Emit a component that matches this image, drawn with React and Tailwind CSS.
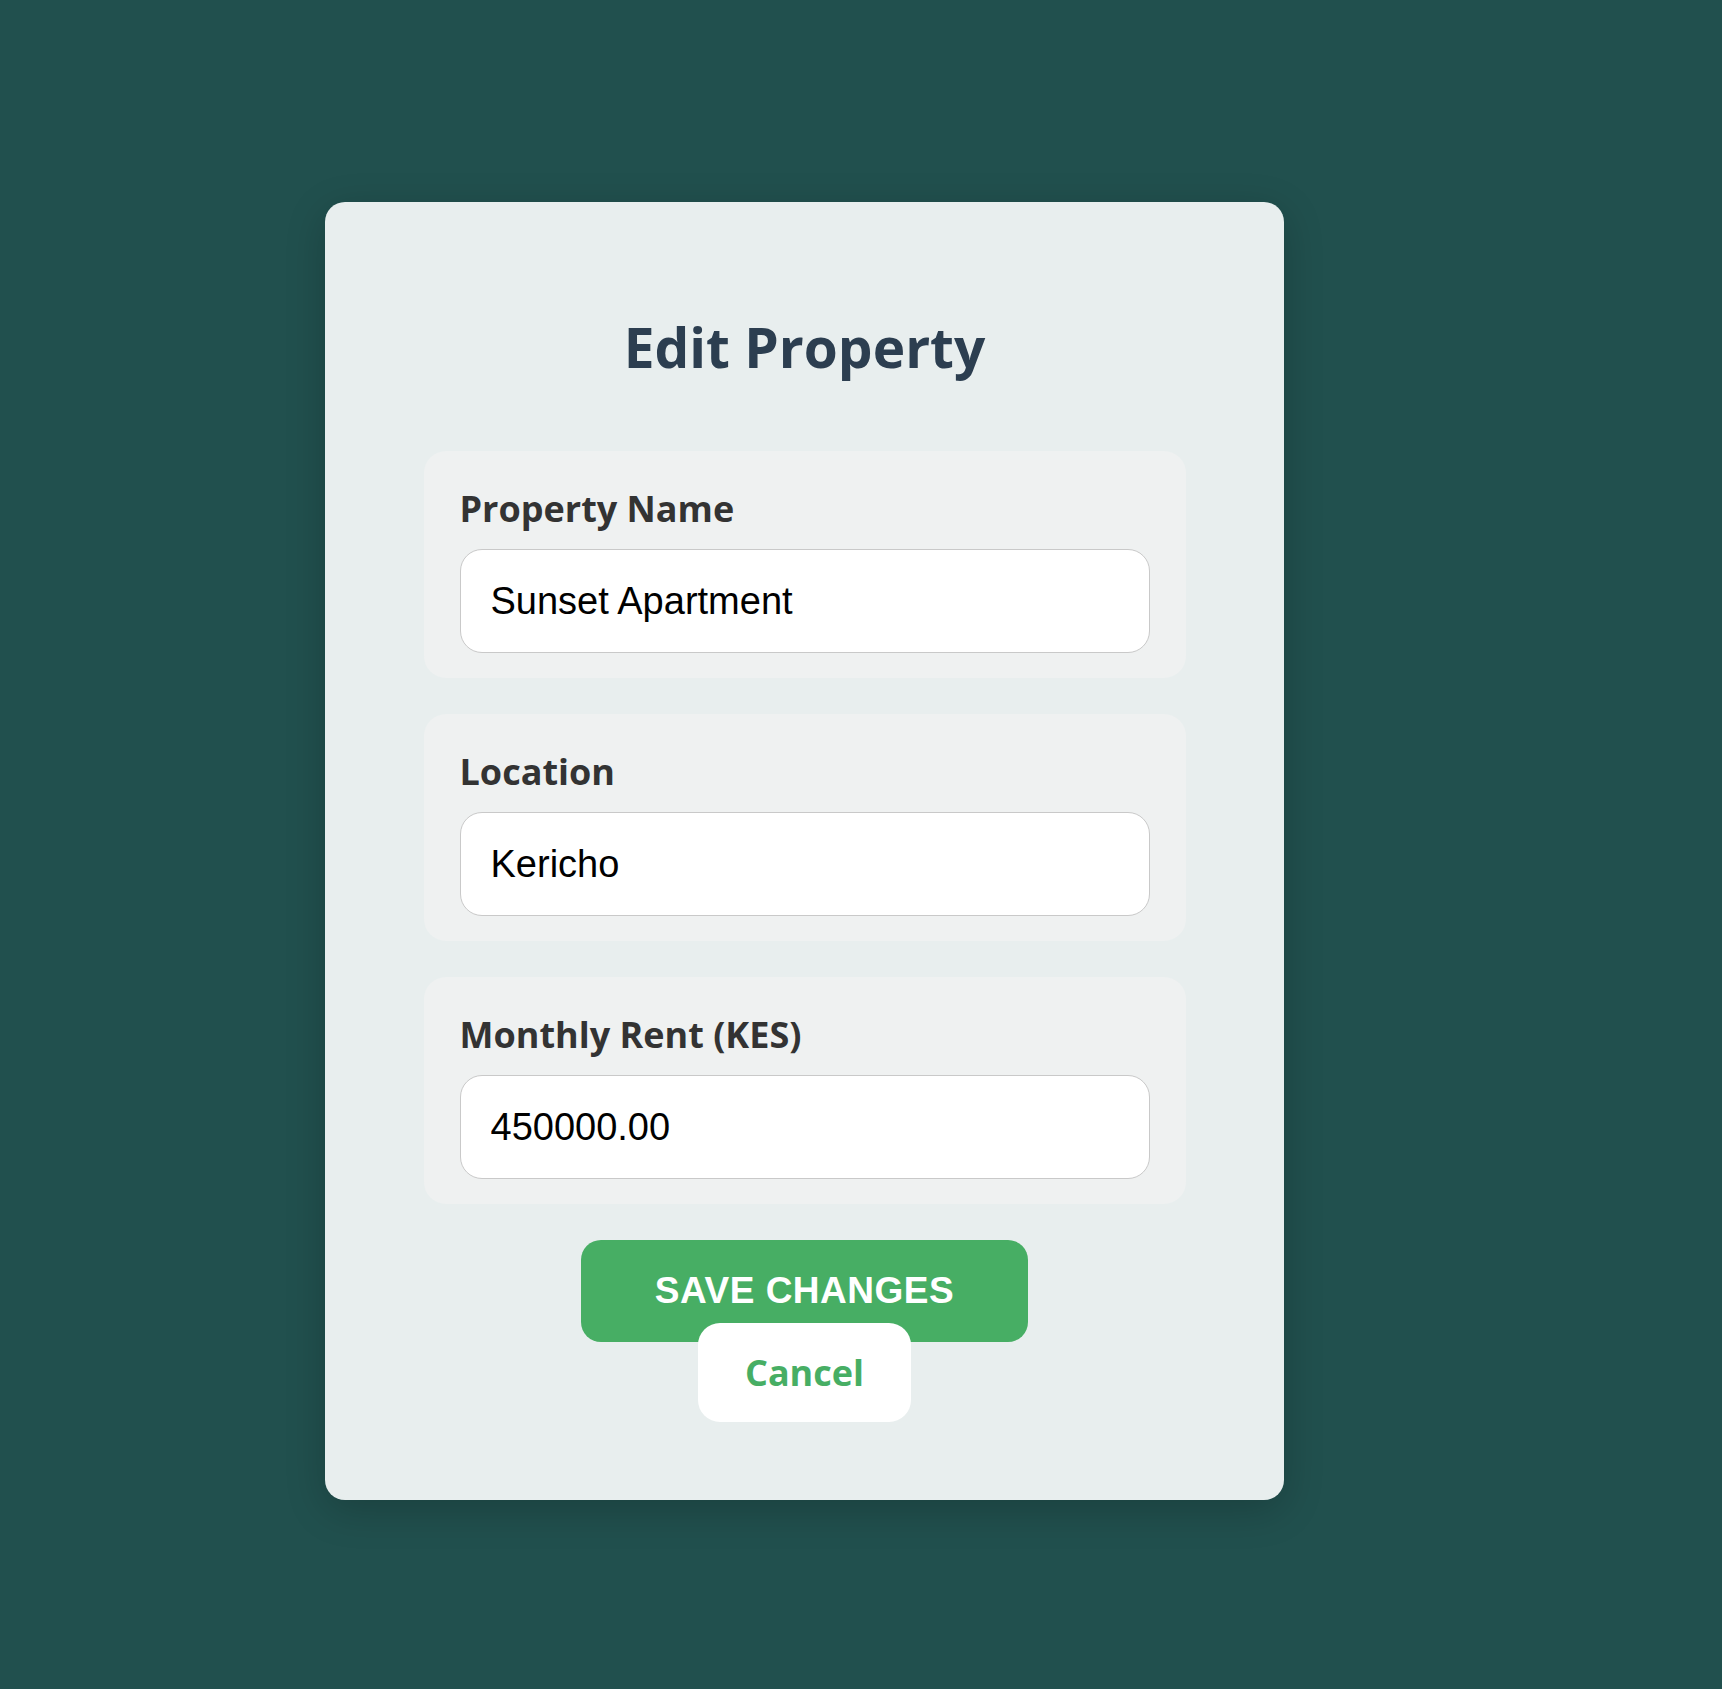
import React, { useState } from 'react';

const FIELDS = [
  { key: 'name', label: 'Property Name', type: 'text' },
  { key: 'location', label: 'Location', type: 'text' },
  { key: 'rent', label: 'Monthly Rent (KES)', type: 'number' },
];

export default function App() {
  const [form, setForm] = useState({
    name: 'Sunset Apartment',
    location: 'Kericho',
    rent: '450000.00',
  });

  const handleChange = (key, value) => {
    setForm((prev) => ({
      ...prev,
      [key]: value,
    }));
  };

  return (
    <div className="min-h-screen bg-[#21504e] pt-[202px] pb-[188px] pl-[325px]">
      <div className="w-[959px] rounded-[20px] bg-[#e8eeee] pt-[107px] pb-[78px] shadow-[0_10px_40px_rgba(0,0,0,0.2)] font-['Open_Sans',sans-serif]">
        <h2 className="mb-[66px] text-center text-[55px] font-bold leading-[76px] text-[#2c3e50]">
          Edit Property
        </h2>

        <form className="flex flex-col items-center gap-[36px]" onSubmit={(e) => e.preventDefault()}>
          {FIELDS.map((f) => (
            <div key={f.key} className="w-[762px] rounded-[22px] bg-[#eff1f1] px-[36px] pt-[33px] pb-[25px]">
              <label className="mb-[15px] block text-[36px] font-bold leading-[50px] text-[#333333]">
                {f.label}
              </label>
              <input
                type="text"
                value={form[f.key]}
                onChange={(e) => handleChange(f.key, e.target.value)}
                className="block h-[104px] w-full rounded-[22px] border-[1.5px] border-[#c9c9c9] bg-white px-[30px] font-['Liberation_Sans',Arial,sans-serif] text-[38px] text-black outline-none"
              />
            </div>
          ))}

          {/* Buttons */}
          <div className="flex flex-col items-center">
            <button
              type="submit"
              className="h-[102px] w-[447px] rounded-[20px] bg-[#47ae64] font-['Liberation_Sans',Arial,sans-serif] text-[37px] font-bold uppercase tracking-[0.5px] text-white"
            >
              Save Changes
            </button>
            <button
              type="button"
              className="-mt-[19px] h-[99px] w-[213px] rounded-[22px] bg-white text-[36px] font-bold text-[#47ae64]"
            >
              Cancel
            </button>
          </div>
        </form>
      </div>
    </div>
  );
}
